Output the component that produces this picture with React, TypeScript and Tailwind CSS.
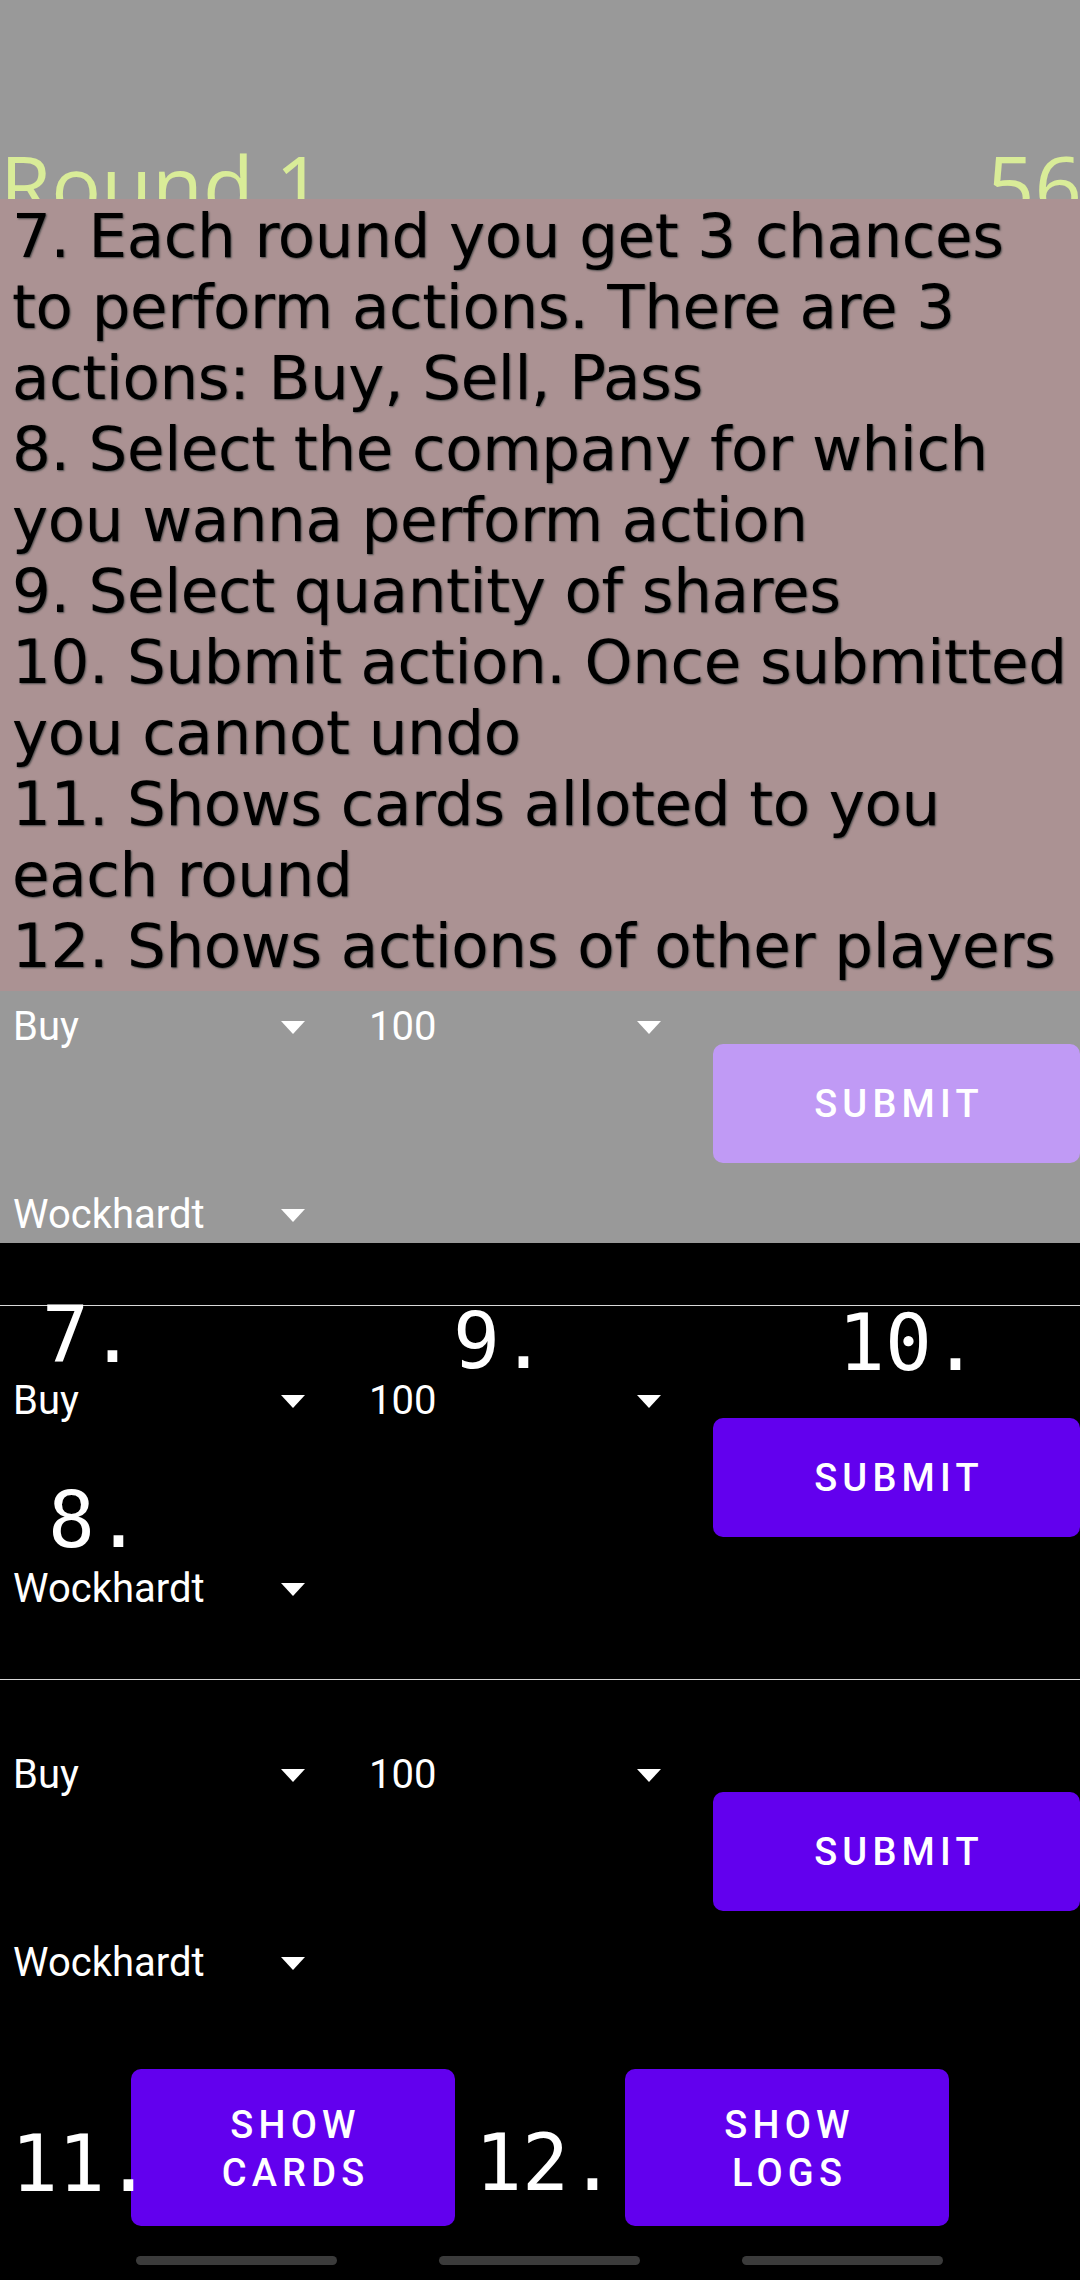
import React from "react";

const lines = [
  "7. Each round you get 3 chances",
  "to perform actions. There are 3",
  "actions: Buy, Sell, Pass",
  "8. Select the company for which",
  "you wanna perform action",
  "9. Select quantity of shares",
  "10. Submit action. Once submitted",
  "you cannot undo",
  "11. Shows cards alloted to you",
  "each round",
  "12. Shows actions of other players",
];

function Arrow() {
  return (
    <svg width="24" height="13" viewBox="0 0 24 13" className="shrink-0">
      <polygon points="0,0 24,0 12,13" fill="#ffffff" />
    </svg>
  );
}

function Spinner({ value }: { value: string }) {
  return (
    <div className="flex h-[72px] w-[356px] items-center justify-between pl-[13px] pr-[51px]">
      <span className="text-[40px] leading-[46px] text-white">{value}</span>
      <Arrow />
    </div>
  );
}

function Controls({ dimmed }: { dimmed?: boolean }) {
  return (
    <div className="flex">
      <div className="flex w-[713px] flex-col">
        <div className="flex">
          <Spinner value="Buy" />
          <Spinner value="100" />
        </div>
        <div className="mt-[116px]">
          <Spinner value="Wockhardt" />
        </div>
      </div>
      <button
        className={
          "mt-[53px] flex h-[119px] w-[367px] items-center justify-center rounded-[10px] pl-[5px] text-[38px] font-medium leading-none tracking-[5.2px] text-white " +
          (dimmed ? "bg-[#c09af5]" : "bg-[#6200ee]")
        }
      >
        SUBMIT
      </button>
    </div>
  );
}

function Label({ text, className }: { text: string; className: string }) {
  return (
    <span
      className={
        "absolute z-10 whitespace-nowrap text-[78px] leading-none text-white [font-family:'DejaVu_Sans_Mono',monospace] " +
        className
      }
    >
      {text}
    </span>
  );
}

function WideButton({ top, bottom }: { top: string; bottom: string }) {
  return (
    <button className="flex h-[157px] w-[324px] shrink-0 flex-col items-center justify-center rounded-[10px] bg-[#6200ee] pl-[5px] pt-[2px] text-[38px] font-medium leading-[48px] tracking-[5.2px] text-white">
      <span>{top}</span>
      <span>{bottom}</span>
    </button>
  );
}

export default function App() {
  return (
    <div className="flex h-[2280px] w-[1080px] flex-col overflow-hidden bg-black [font-family:Roboto,sans-serif]">
      {/* dimmed top part with the help text */}
      <div className="flex h-[1243px] flex-col bg-[#999999]">
        <div className="flex h-[199px] items-start justify-between overflow-hidden pt-[142px] text-[83px] leading-none text-[#d9ec98] [font-family:'Open_Sans',sans-serif]">
          <span>Round 1</span>
          <span className="-mr-[2px]">56</span>
        </div>
        <div className="h-[792px] bg-[#ab9293] pl-[12px] pt-px text-[61px] leading-[71px] tracking-[-0.33px] text-black [font-family:'DejaVu_Sans',sans-serif] [text-shadow:1px_1px_2px_#4a4a4a]">
          {lines.map((l) => (
            <div key={l} className="whitespace-nowrap">
              {l}
            </div>
          ))}
        </div>
        <div className="h-[252px] overflow-hidden">
          <Controls dimmed />
        </div>
      </div>

      <div className="h-[62px]" />

      {/* row with numbered hints */}
      <div className="relative h-[374px]">
        <div className="h-px bg-[#d8d8d8]" />
        <div className="pt-[59px]">
          <Controls />
        </div>
        <Label text="7." className="left-[42px] top-[-9px]" />
        <Label text="9." className="left-[453px] top-[-3px]" />
        <Label text="10." className="left-[838px] top-[-1px]" />
        <Label text="8." className="left-[48px] top-[176px]" />
      </div>

      <div className="h-[374px]">
        <div className="h-px bg-[#d8d8d8]" />
        <div className="pt-[59px]">
          <Controls />
        </div>
      </div>

      <div className="mt-[16px] flex h-[157px] items-start pl-[11px]">
        <span className="relative z-10 mt-[56px] w-[120px] whitespace-nowrap text-[78px] leading-none text-white [font-family:'DejaVu_Sans_Mono',monospace]">
          11.
        </span>
        <WideButton top="SHOW" bottom="CARDS" />
        <span className="ml-[20px] mt-[55px] w-[150px] whitespace-nowrap text-[78px] leading-none text-white [font-family:'DejaVu_Sans_Mono',monospace]">
          12.
        </span>
        <WideButton top="SHOW" bottom="LOGS" />
      </div>

      <div className="mt-[30px] flex gap-[102px] pl-[136px]">
        <div className="h-[9px] w-[201px] rounded-full bg-[#3b3b3b]" />
        <div className="h-[9px] w-[201px] rounded-full bg-[#3b3b3b]" />
        <div className="h-[9px] w-[201px] rounded-full bg-[#3b3b3b]" />
      </div>
    </div>
  );
}
